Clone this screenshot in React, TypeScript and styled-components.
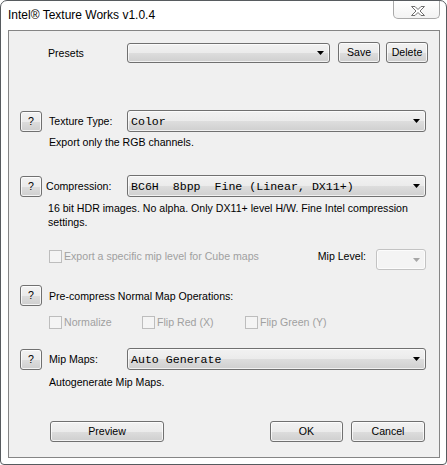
import React from "react";
import styled, { createGlobalStyle } from "styled-components";

const UI_FONT = `"Liberation Sans", Arial, sans-serif`;
const MONO_FONT = `"Liberation Mono", "Courier New", monospace`;

const GlobalStyle = createGlobalStyle`
  html, body {
    margin: 0;
    padding: 0;
    background: #ffffff;
  }
  * {
    box-sizing: border-box;
  }
`;

const Window = styled.div`
  width: 447px;
  height: 465px;
  border: 1px solid #575b5f;
  border-radius: 7px 7px 4px 4px;
  background: #ffffff;
  display: flex;
  flex-direction: column;
  font-family: ${UI_FONT};
  color: #000000;
  overflow: hidden;
`;

const TitleBar = styled.div`
  height: 29px;
  flex-shrink: 0;
  display: flex;
  align-items: flex-start;
  padding-left: 7px;
`;

const Title = styled.div`
  flex: 1;
  margin-top: 7px;
  font-size: 12px;
  line-height: 14px;
`;

const CloseButton = styled.div`
  width: 47px;
  height: 19px;
  margin: -1px 6px 0 0;
  padding: 2px 0 0 3px;
  border: 1px solid #a9a9a9;
  border-top-color: #8a8a8a;
  border-radius: 0 0 5px 5px;
  background: linear-gradient(#ffffff, #f3f3f3);
  display: flex;
  align-items: center;
  justify-content: center;
`;

const Client = styled.div`
  flex: 1;
  margin: 0 6px 6px 7px;
  border: 1px solid #858585;
  background: #f0f0f0;
  display: flex;
  flex-direction: column;
  font-size: 10.6px;
`;

const Row = styled.div<{ $top: number; $left?: number; $right?: number; $align?: string }>`
  display: flex;
  align-items: ${(p) => p.$align ?? "center"};
  margin-top: ${(p) => p.$top}px;
  padding-left: ${(p) => p.$left ?? 11}px;
  padding-right: ${(p) => p.$right ?? 13}px;
`;

const PushButton = styled.div<{ $width: number; $height?: number; $gap?: number }>`
  flex-shrink: 0;
  width: ${(p) => p.$width}px;
  height: ${(p) => p.$height ?? 21}px;
  margin-left: ${(p) => p.$gap ?? 0}px;
  border: 1px solid #707070;
  border-radius: 3px;
  box-shadow: inset 0 0 0 1px rgba(255, 255, 255, 0.75);
  background: linear-gradient(#f2f2f2 0%, #ebebeb 50%, #dddddd 51%, #cfcfcf 100%);
  display: flex;
  align-items: center;
  justify-content: center;
  font-size: 10.6px;
  line-height: 13px;
`;

const PushSpacer = styled.div`
  flex: 1;
`;

const FieldLabel = styled.span<{ $width: number; $indent: number }>`
  flex: 0 0 ${(p) => p.$width}px;
  padding-left: ${(p) => p.$indent}px;
  white-space: nowrap;
  line-height: 14px;
`;

const Combo = styled.div<{ $width?: number; $height: number; $disabled?: boolean }>`
  flex: ${(p) => (p.$width ? `0 0 ${p.$width}px` : "1")};
  height: ${(p) => p.$height}px;
  border: 1px solid ${(p) => (p.$disabled ? "#c3c3c3" : "#707070")};
  border-radius: 3px;
  box-shadow: inset 0 0 0 1px rgba(255, 255, 255, 0.7);
  background: ${(p) =>
    p.$disabled
      ? "#f4f4f4"
      : "linear-gradient(#f2f2f2 0%, #ebebeb 50%, #dddddd 51%, #cfcfcf 100%)"};
  display: flex;
  align-items: center;
  padding: 0 5px 0 3px;
`;

const ComboText = styled.span`
  flex: 1;
  font-family: ${MONO_FONT};
  font-size: 11.6px;
  line-height: 14px;
  white-space: pre;
  padding-top: 1px;
`;

const Description = styled.div<{ $top: number; $left?: number }>`
  margin-top: ${(p) => p.$top}px;
  padding-left: ${(p) => p.$left ?? 40}px;
  line-height: 14px;
`;

const CheckItem = styled.label`
  display: flex;
  align-items: center;
  height: 14px;
  color: #a0a0a0;
  white-space: nowrap;
`;

const CheckBox = styled.span`
  width: 13px;
  height: 13px;
  margin-right: 2px;
  border: 1px solid #bdbdbd;
  background: #f4f4f4;
  flex-shrink: 0;
`;

const CheckGrid = styled.div`
  display: grid;
  grid-template-columns: 93px 103px auto;
  align-items: center;
  margin-top: 9px;
  padding-left: 40px;
`;

const MipLabel = styled.span`
  margin-left: auto;
  margin-right: 10px;
  line-height: 14px;
`;

const Arrow = ({ color = "#000000" }: { color?: string }) => (
  <svg width="7" height="4" viewBox="0 0 7 4">
    <polygon points="0,0 7,0 3.5,4" fill={color} />
  </svg>
);

const CloseGlyph = () => (
  <svg width="14" height="10" viewBox="0 0 14 10">
    <polygon
      points="0.5,0.5 4,0.5 7,3.5 10,0.5 13.5,0.5 9,5 13.5,9.5 10,9.5 7,6.5 4,9.5 0.5,9.5 5,5"
      fill="#ffffff"
      stroke="#6e6e6e"
      strokeWidth="1"
      strokeLinejoin="round"
    />
  </svg>
);

const Help = () => <PushButton $width={22}>?</PushButton>;

const App: React.FC = () => {
  return (
    <>
      <GlobalStyle />
      <Window>
        <TitleBar>
          <Title>Intel® Texture Works v1.0.4</Title>
          <CloseButton>
            <CloseGlyph />
          </CloseButton>
        </TitleBar>
        <Client>
          <Row $top={11} $left={39}>
            <FieldLabel $width={79} $indent={0}>
              Presets
            </FieldLabel>
            <Combo $width={203} $height={20}>
              <ComboText />
              <Arrow />
            </Combo>
            <PushButton $width={42} $gap={8}>
              Save
            </PushButton>
            <PushButton $width={42} $gap={6}>
              Delete
            </PushButton>
          </Row>

          <Row $top={47}>
            <Help />
            <FieldLabel $width={85} $indent={7}>
              Texture Type:
            </FieldLabel>
            <Combo $height={22}>
              <ComboText>Color</ComboText>
              <Arrow />
            </Combo>
          </Row>
          <Description $top={3}>Export only the RGB channels.</Description>

          <Row $top={26}>
            <Help />
            <FieldLabel $width={85} $indent={4}>
              Compression:
            </FieldLabel>
            <Combo $height={22}>
              <ComboText>BC6H  8bpp  Fine (Linear, DX11+)</ComboText>
              <Arrow />
            </Combo>
          </Row>
          <Description $top={4} $left={39}>
            16 bit HDR images. No alpha. Only DX11+ level H/W. Fine Intel compression
            <br />
            settings.
          </Description>

          <Row $top={20} $left={40} $align="flex-start">
            <CheckItem>
              <CheckBox />
              Export a specific mip level for Cube maps
            </CheckItem>
            <MipLabel>Mip Level:</MipLabel>
            <Combo $width={50} $height={21} $disabled>
              <ComboText />
              <Arrow color="#a6a6a6" />
            </Combo>
          </Row>

          <Row $top={15}>
            <Help />
            <FieldLabel $width={300} $indent={7}>
              Pre-compress Normal Map Operations:
            </FieldLabel>
          </Row>

          <CheckGrid>
            <CheckItem>
              <CheckBox />
              Normalize
            </CheckItem>
            <CheckItem>
              <CheckBox />
              Flip Red (X)
            </CheckItem>
            <CheckItem>
              <CheckBox />
              Flip Green (Y)
            </CheckItem>
          </CheckGrid>

          <Row $top={19}>
            <Help />
            <FieldLabel $width={85} $indent={7}>
              Mip Maps:
            </FieldLabel>
            <Combo $height={22}>
              <ComboText>Auto Generate</ComboText>
              <Arrow />
            </Combo>
          </Row>
          <Description $top={5}>Autogenerate Mip Maps.</Description>

          <Row $top={32} $left={41} $right={14}>
            <PushButton $width={114}>Preview</PushButton>
            <PushSpacer />
            <PushButton $width={73}>OK</PushButton>
            <PushButton $width={74} $gap={8}>
              Cancel
            </PushButton>
          </Row>
        </Client>
      </Window>
    </>
  );
};

export default App;
